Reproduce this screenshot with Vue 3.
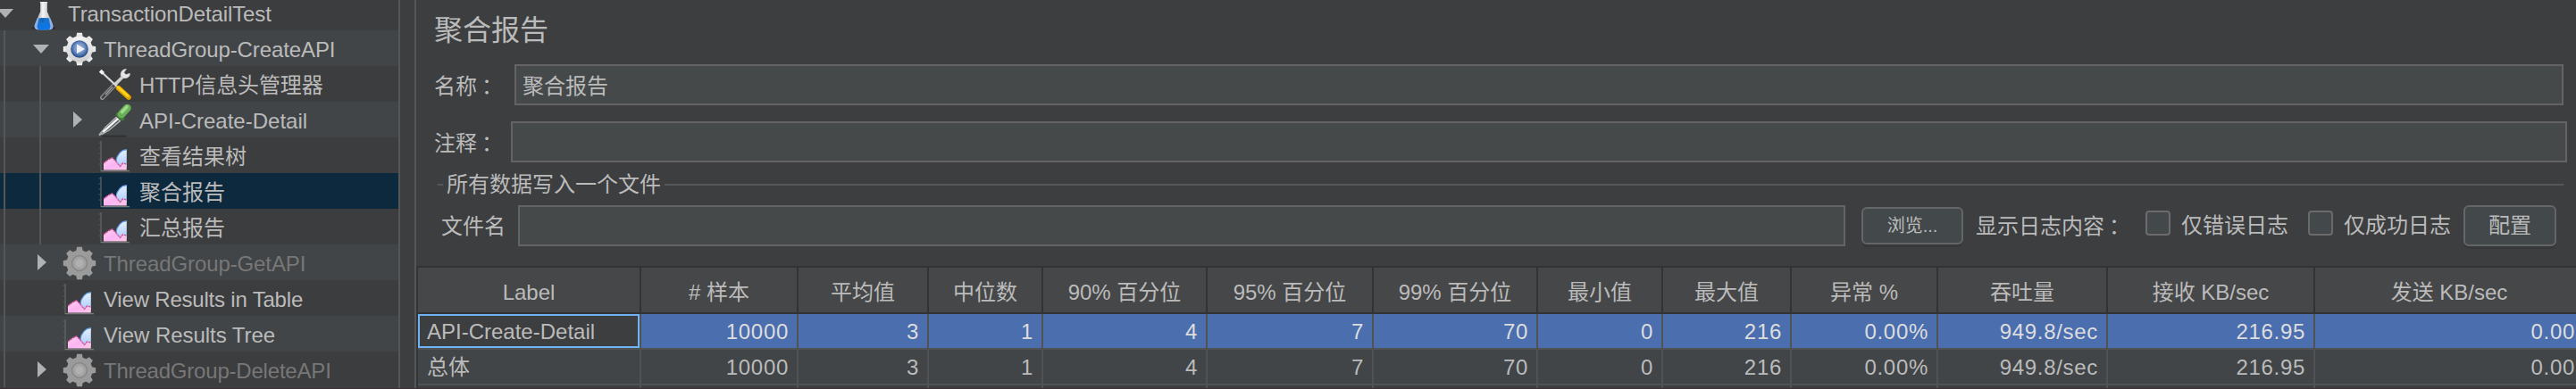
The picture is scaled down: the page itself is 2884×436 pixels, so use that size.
<script setup>
const tree = [
  { depth: 0, icon: 'flask', toggle: 'open', label: 'TransactionDetailTest', cls: 'tight' },
  { depth: 1, icon: 'gear', toggle: 'open', label: 'ThreadGroup-CreateAPI', cls: 'tight' },
  { depth: 2, icon: 'tools', label: 'HTTP信息头管理器', cls: 'tight' },
  { depth: 2, icon: 'dropper', toggle: 'closed', label: 'API-Create-Detail' },
  { depth: 2, icon: 'chart', label: '查看结果树' },
  { depth: 2, icon: 'chart', label: '聚合报告', cls: 'selected' },
  { depth: 2, icon: 'chart', label: '汇总报告' },
  { depth: 1, icon: 'gear-off', toggle: 'closed', label: 'ThreadGroup-GetAPI', cls: 'disabled tight' },
  { depth: 1, icon: 'chart', label: 'View Results in Table', cls: 'tighter' },
  { depth: 1, icon: 'chart', label: 'View Results Tree', cls: 'wider' },
  { depth: 1, icon: 'gear-off', toggle: 'closed', label: 'ThreadGroup-DeleteAPI', cls: 'disabled tighter' },
]
const headers = ['Label', '# 样本', '平均值', '中位数', '90% 百分位', '95% 百分位', '99% 百分位', '最小值', '最大值', '异常 %', '吞吐量', '接收 KB/sec', '发送 KB/sec']
const rows = [
  ['API-Create-Detail', '10000', '3', '1', '4', '7', '70', '0', '216', '0.00%', '949.8/sec', '216.95', '0.00'],
  ['总体', '10000', '3', '1', '4', '7', '70', '0', '216', '0.00%', '949.8/sec', '216.95', '0.00'],
]
const teeth = [0, 45, 90, 135, 180, 225, 270, 315]
</script>

<template>
  <div class="app">
    <svg class="defs" width="0" height="0">
      <defs>
        <linearGradient id="gGlass" x1="0" x2="1" y1="0" y2="0">
          <stop offset="0" stop-color="#85888c" /><stop offset=".45" stop-color="#f4f5f6" /><stop offset="1" stop-color="#a4a7ab" />
        </linearGradient>
        <linearGradient id="gBlue" x1="0" x2="0" y1="0" y2="1">
          <stop offset="0" stop-color="#1b6fc4" /><stop offset="1" stop-color="#0a78ee" />
        </linearGradient>
        <linearGradient id="gGear" x1="0" x2="0" y1="0" y2="1">
          <stop offset="0" stop-color="#f4f4f4" /><stop offset="1" stop-color="#cfcfcf" />
        </linearGradient>
        <radialGradient id="gHub" cx=".5" cy=".45" r=".55">
          <stop offset="0" stop-color="#a9c0e0" /><stop offset=".55" stop-color="#6f90c2" /><stop offset="1" stop-color="#1d4386" />
        </radialGradient>
        <linearGradient id="gPink" x1="0" x2="1" y1="0" y2="1">
          <stop offset="0" stop-color="#ffd3ea" /><stop offset=".5" stop-color="#fbb4f3" /><stop offset="1" stop-color="#ffc9e4" />
        </linearGradient>
        <linearGradient id="gSky" x1="0" x2="0" y1="0" y2="1">
          <stop offset="0" stop-color="#e4f1ff" /><stop offset="1" stop-color="#a9cbf8" />
        </linearGradient>
      </defs>
    </svg>

    <aside class="tree">
      <div v-for="(n, i) in tree" :key="i" class="node" :class="n.cls">
        <span v-for="g in n.depth" :key="g" class="guide"></span>
        <span class="toggle">
          <svg v-if="n.toggle === 'open'" width="18" height="10" viewBox="0 0 18 10"><path d="M0 0H18L9 10Z" fill="#afb1b3" /></svg>
          <svg v-else-if="n.toggle === 'closed'" class="right" width="10" height="18" viewBox="0 0 10 18"><path d="M0 0L10 9L0 18Z" fill="#afb1b3" /></svg>
        </span>
        <svg class="icon" width="40" height="40" viewBox="0 0 40 40">
          <g v-if="n.icon === 'flask'">
            <ellipse cx="19" cy="37.5" rx="13.5" ry="1.6" fill="#292a2c" />
            <path d="M14.6 8H23.4L22.8 10V19L28.6 32Q30.6 39 26 39.2H12Q7.4 39 9.4 32L15.2 19V10Z" fill="url(#gGlass)" />
            <path d="M12 26L8.6 34.5Q8 38.8 12 39H26Q30 38.8 29.4 34.5L26 26Z" fill="#8fb0e4" />
            <path d="M13.6 26.5Q19 25.4 24.6 26.5L26.4 35.5Q26.2 39 23.6 39.4H14.4Q11.8 39 11.6 35.5Z" fill="url(#gBlue)" />
            <path d="M16 26.2H19V31H15Z" fill="#1461a8" opacity=".7" />
          </g>
          <g v-else-if="n.icon === 'gear' || n.icon === 'gear-off'" transform="translate(19 21)">
            <g :fill="n.icon === 'gear' ? 'url(#gGear)' : '#9b9b9b'">
              <path v-for="a in teeth" :key="a" d="M-4.2 -12L-2.8 -18.2H2.8L4.2 -12Z" :transform="'rotate(' + a + ')'" />
              <circle r="14.6" />
            </g>
            <template v-if="n.icon === 'gear'">
              <circle r="9.8" fill="url(#gHub)" />
              <path d="M-3 -5.4L6 0L-3 5Z" fill="#eef3fa" />
            </template>
            <template v-else>
              <circle r="8.4" fill="#a3a3a3" stroke="#8a8a8a" stroke-width="1.8" />
              <circle r="4.5" fill="#b0b0b0" />
            </template>
          </g>
          <g v-else-if="n.icon === 'tools'" fill="none" stroke-linecap="round">
            <path d="M4.5 35.5L19 20.5" stroke="#939393" stroke-width="5.2" />
            <path d="M4.8 35.2L19 20.5" stroke="#454647" stroke-width="2.8" />
            <path d="M8.5 31.5L16 23.6" stroke="#a9a9a9" stroke-width="1.2" />
            <path d="M20 19.5L27 12.5" stroke="#d0d0d0" stroke-width="3.6" />
            <path d="M31 3.6Q25 4 25.2 10.5Q27.5 15 33 12.8Q35.8 10.8 35.2 8.4L31 9.8L28.8 7.4Z" fill="#e6e6e6" stroke="#cfcfcf" />
            <path d="M3.5 6.5L21 23" stroke="#d8d8d8" stroke-width="2.2" />
            <path d="M2.2 5.2L5.6 8.4" stroke="#f2f2f2" stroke-width="4" stroke-linecap="butt" />
            <path d="M22.6 24.6L34 35" stroke="#e0a200" stroke-width="5.6" />
            <path d="M22.4 24L33 33.4" stroke="#ffd21c" stroke-width="3" />
          </g>
          <g v-else-if="n.icon === 'dropper'" fill="none" stroke-linecap="round">
            <path d="M5 38.6H31" stroke="#2c2e30" stroke-width="1.8" />
            <path d="M3 35L8 28.6L20 17.4L24.4 21.6L12 32L4 36.6Z" fill="#5f6263" stroke="#b4b6b7" stroke-width="1.4" />
            <path d="M1.6 37L3.4 34.8" stroke="#a8aaab" stroke-width="2.2" />
            <path d="M6 33.4L21.6 19.4" stroke="#f6f6f6" stroke-width="2.2" />
            <path d="M22 14.4L27 19" stroke="#3f7d36" stroke-width="4.6" />
            <path d="M26 14L32.4 7" stroke="#68b056" stroke-width="8.6" />
            <path d="M26.6 11.6L32 5.8" stroke="#a2d98f" stroke-width="3.4" />
          </g>
          <g v-else>
            <path d="M3 4V38" stroke="#66686a" stroke-width="1.2" />
            <path d="M.5 6H3M.5 12H3M.5 18H3M.5 24H3M.5 30H3" stroke="#595b5d" />
            <path d="M3 37.6H35" stroke="#77797b" stroke-width="1.4" />
            <path d="M20 27.6L21 22L24 17.4L27.4 14.6L31.8 13.4V33L25 34Z" fill="url(#gSky)" />
            <path d="M20 26.6L21 22L24 17.4L27.4 14.6L31.8 13.6" fill="none" stroke="#5e97e6" stroke-width="1.1" />
            <path d="M6 36.6V29L11 25L15.6 22.8L20.4 27.4L24.4 32.4L27.6 28.8L31.8 31V36.6Z" fill="url(#gPink)" />
            <path d="M6 29L11 25L15.6 22.8L20.4 27.4L24.4 32.4L27.6 28.8L31.8 30" fill="none" stroke="#cc5a9e" stroke-width="1.5" stroke-dasharray="2.6 .8" />
          </g>
        </svg>
        <span class="label">{{ n.label }}</span>
      </div>
    </aside>
    <div class="splitter"></div>

    <main class="panel">
      <h1>聚合报告</h1>
      <div class="field name">
        <label>名称<i>：</i></label>
        <div class="input">聚合报告</div>
      </div>
      <div class="field comment">
        <label>注释<i>：</i></label>
        <div class="input"></div>
      </div>
      <div class="legend"><span>所有数据写入一个文件</span></div>
      <div class="file">
        <label>文件名</label>
        <div class="input"></div>
        <button class="browse">浏览...</button>
        <span class="log">显示日志内容<i>：</i></span>
        <span class="check"></span>
        <span class="opt first">仅错误日志</span>
        <span class="check"></span>
        <span class="opt">仅成功日志</span>
        <button class="config">配置</button>
      </div>
      <div class="table">
        <div class="tr head">
          <div v-for="h in headers" :key="h" class="td">{{ h }}</div>
        </div>
        <div v-for="(r, i) in rows" :key="i" class="tr" :class="i === 0 ? 'active' : 'alt'">
          <div v-for="(c, j) in r" :key="j" class="td" :class="{ num: j > 0 }">{{ c }}</div>
        </div>
        <div class="tr rest"><div v-for="h in headers" :key="h" class="td"></div></div>
      </div>
    </main>
  </div>
</template>

<style>
body { margin: 0; overflow: hidden; background: #3c3d3f; }
</style>

<style scoped>
* { box-sizing: border-box; }
.app {
  display: flex;
  width: 2884px;
  height: 436px;
  overflow: hidden;
  position: relative;
  background: #3d3e40;
  color: #bbbbbb;
  border-bottom: 1px solid #3a2f34;
  font: 24px/30px "Liberation Sans", "Noto Sans CJK SC", sans-serif;
  white-space: pre;
}
.defs { position: absolute; }
i { font-style: normal; margin-left: 5px; }

.tree { width: 446px; flex: none; margin-top: -6px; }
.node { display: flex; height: 40px; background: #3c3d3f; }
.node:nth-child(even) { background: #414547; }
.node.selected { background: #0d293e; }
.guide { flex: none; width: 40px; padding-left: 4px; }
.guide::before { content: ""; display: block; width: 2px; height: 40px; background: #545658; }
.toggle { flex: none; width: 30px; display: flex; align-items: center; }
.toggle svg { flex: none; margin: 2px 0 0 -3px; }
.toggle svg.right { margin: 0 0 0 2px; }
.icon { flex: none; }
.label { padding: 7px 0 0 6px; }
.tight .label { letter-spacing: -0.1px; }
.tighter .label { letter-spacing: -0.2px; }
.wider .label { letter-spacing: -0.05px; }
.disabled .label { color: #777777; }

.splitter { flex: none; width: 20px; border: solid #555658; border-width: 0 2px; background: #3d3e40; }

.panel { flex: 1; min-width: 0; display: flex; flex-direction: column; }
.panel > * { flex: none; }
h1 { margin: 0; padding: 14px 0 0 20px; height: 72px; font-size: 32px; line-height: 40px; font-weight: 400; }
.input { height: 46px; border: 2px solid #646464; background: #45494a; padding: 8px 0 0 7px; flex: 1; }
.field { display: flex; padding-left: 20px; }
.field label { padding-top: 10px; }
.name { height: 64px; padding-right: 14px; }
.name label { width: 90px; }
.comment { height: 46px; padding-right: 10px; }
.comment label { width: 86px; }
.legend { display: flex; align-items: center; height: 48px; padding: 2px 14px 0 24px; }
.legend::before, .legend::after { content: ""; height: 2px; background: #555758; }
.legend::before { width: 6px; }
.legend::after { flex: 1; }
.legend span { padding: 0 4px; }
.file { display: flex; height: 68px; padding-left: 28px; align-items: flex-start; }
.file label { width: 86px; padding-top: 9px; }
.file .input { flex: none; width: 1486px; }
button {
  margin: 0; padding: 0; color: inherit; font: inherit; text-align: center;
  border: 2px solid #646667; border-radius: 6px; background: #43494b; box-shadow: 0 4px 0 -1px #36383a;
}
.browse { margin: 2px 0 0 18px; width: 114px; height: 42px; font-size: 20px; line-height: 37px; }
.log { padding-top: 9px; margin-left: 14px; width: 190px; flex: none; }
.check { flex: none; width: 28px; height: 28px; margin-top: 6px; border: 2px solid #6b6b6b; border-radius: 4px; background: #43494a; }
.opt { flex: none; padding: 8px 0 0 12px; width: 146px; }
.opt.first { width: 154px; }
.config { flex: none; width: 104px; height: 46px; line-height: 42px; }

.table { height: 138px; border-top: 2px solid #323335; border-left: 2px solid #343537; overflow: hidden; }
.tr {
  display: grid;
  grid-template-columns: 250px 176px 146px 128px 184px 186px 184px 140px 144px 164px 190px 232px 302px;
  height: 40px;
}
.td { border-right: 2px solid #505254; border-bottom: 2px solid #505254; padding: 6px 9px 0 10px; line-height: 28px; }
.head { height: 52px; }
.head .td { background: #464748; border-color: #323335; text-align: center; padding: 14px 0 0; }
.num { text-align: right; letter-spacing: .7px; }
.active .num { background: #4b6eaf; color: #dddddd; }
.active .td:first-child { box-shadow: inset 0 0 0 2px #6fb3f5; }
.alt .td { background: #414547; }
.rest { height: 4px; }
.rest .td { padding: 0; border-bottom: 0; }
</style>
